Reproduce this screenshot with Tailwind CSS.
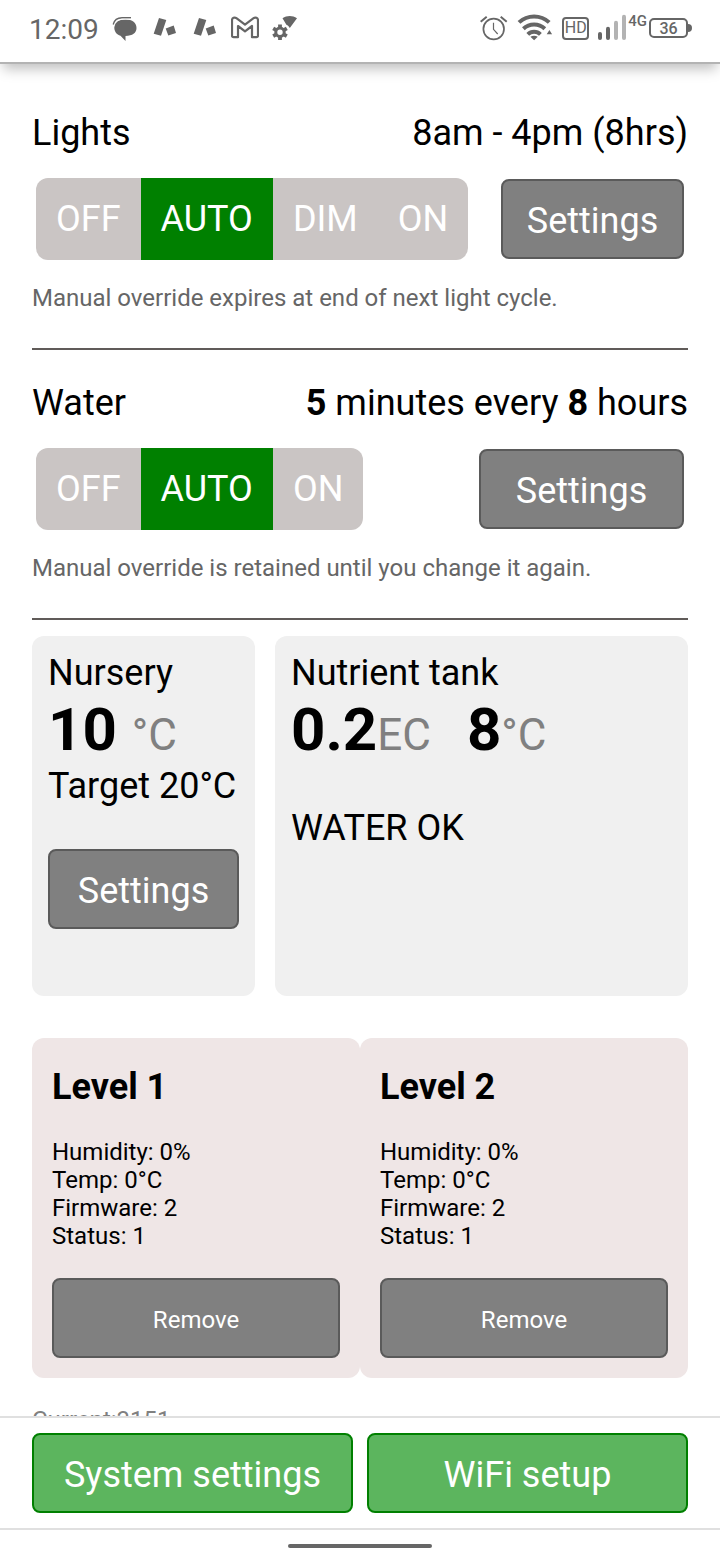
<!DOCTYPE html>
<html lang="en">
  <head>
    <meta charset="UTF-8" />
    <meta name="viewport" content="width=device-width, initial-scale=1.0" />
    <title>Grow controller</title>
    <script src="https://cdn.jsdelivr.net/npm/@tailwindcss/browser@4"></script>
  </head>
  <body class="bg-white text-black min-h-screen font-['Roboto',sans-serif] text-[36px] leading-[42px]">
    <!-- Phone status bar -->
    <header class="relative h-16 border-b-2 border-[#b3b3b3] bg-white shadow-[0_8px_12px_-3px_rgba(0,0,0,0.25)] px-7 pb-[6px] flex items-center justify-between text-[#666]">
      <div class="flex items-center gap-3">
        <span class="text-[28px] leading-8 pt-1 pl-px">12:09</span>
        <svg class="size-7" viewBox="0 0 28 28" fill="currentColor">
          <path d="M3.300 13.500C3.300 8.500 7.500 5.600 14.500 5.600S25.500 9 25.500 14s-4 7.700-11 8V27l-5-5.200C5.600 20.500 3.300 17.500 3.300 13.500z" />
          <path d="M2.200 10.500C3.200 6.500 6.500 3.800 11 3.800h9" fill="none" stroke="currentColor" stroke-width="1.400" />
          <path d="M3 12.500C4 8 7.500 5.200 12 5.200h9" fill="none" stroke="#fff" stroke-width=".8" />
        </svg>
        <svg class="size-7" viewBox="0 0 28 28" fill="currentColor">
          <path d="M8 4l7.300 2L10 21.700l-7.300-2zM22.700 11.400l2.300 7.600-7.700 2.600-2.600-7z" />
        </svg>
        <svg class="size-7" viewBox="0 0 28 28" fill="currentColor">
          <path d="M8 4l7.300 2L10 21.700l-7.300-2zM22.700 11.400l2.300 7.600-7.700 2.600-2.600-7z" />
        </svg>
        <svg class="size-7" viewBox="0 0 28 28" fill="none" stroke="currentColor" stroke-width="2.200" stroke-linejoin="round">
          <path d="M2.500 23.200H7V12l7 5.300L21 12v11.200h4.500c1 0 1.500-.6 1.500-1.500V6.200c0-2.300-2.600-3.300-4.400-2L14 10.600 5.400 4.200C3.600 2.900 1 3.900 1 6.200v15.500c0 .9.5 1.500 1.500 1.500z" />
        </svg>
        <svg class="size-7" viewBox="0 0 28 28" fill="none" stroke="currentColor">
          <circle cx="9" cy="18.300" r="4.200" stroke-width="3" />
          <path d="M9 10.500v3M9 23.100v3M2.200 14.400l2.600 1.500M13.200 20.700l2.600 1.500M2.200 22.200l2.600-1.500M13.200 15.900l2.600-1.500" stroke-width="3.800" />
          <path d="M11.500 4.200c4.500-3 10-3 14.500 0L18.800 14c-.8-1.600-2-2.600-3.400-3.300z" fill="currentColor" stroke="none" />
        </svg>
      </div>

      <div class="flex items-center gap-[9px]">
        <svg class="size-7" viewBox="0 0 28 28" fill="none" stroke="currentColor">
          <circle cx="13.700" cy="15" r="10.300" stroke-width="1.700" />
          <path d="M.7 7.700l6-5M20.700 2.700l6 5" stroke-width="2" />
          <path d="M13.500 8.700v6.600l4.200 4.700" stroke-width="1.200" />
        </svg>
        <svg class="h-7 w-9" viewBox="0 0 36 28" fill="none" stroke="currentColor" stroke-width="4">
          <path d="M2 8.400A22 22 0 0 1 32.200 8.400M6.400 14.800a15.500 15.500 0 0 1 21.400 0M10.800 20.400a9 9 0 0 1 12.600 0" />
          <path d="M13.400 22.800q3.700-2 7.400 0l-3.700 3.400zM29.700 20.300h5.400L32.400 16z" fill="currentColor" stroke="none" />
        </svg>
        <span class="h-[23px] w-[27px] border-2 border-[#666] rounded-[4px] flex items-center justify-center text-[16px] leading-4">HD</span>
        <div class="flex items-center gap-[2px]">
          <svg class="size-7" viewBox="0 0 28 28" fill="currentColor">
            <rect y="18" width="4" height="8" rx="2" />
            <rect x="8" y="12.700" width="4" height="13.300" rx="2" />
            <rect x="16" y="6.700" width="4" height="19.300" rx="2" fill="#b3b3b3" />
            <rect x="24" y=".7" width="4" height="25.300" rx="2" fill="#b3b3b3" />
          </svg>
          <span class="self-start text-[15px] leading-[14px] font-medium">4G</span>
          <div class="flex items-center">
            <span class="h-5 w-[39px] border-2 border-[#666] rounded-[5px] flex items-center justify-center pt-px text-[16px] leading-4 font-medium">36</span>
            <span class="h-2 w-1 bg-[#666] rounded-r-full"></span>
          </div>
        </div>
      </div>
    </header>

    <main class="px-8 pt-4 pb-[160px]">
      <!-- Lights -->
      <section class="border-b-2 border-[#605b59] pt-8 pb-9">
        <div class="flex justify-between">
          <h2>Lights</h2>
          <p>8am - 4pm (8hrs)</p>
        </div>
        <div class="flex items-center justify-between px-1 my-6">
          <div class="flex rounded-xl overflow-hidden bg-[#cac5c4] text-white" role="radiogroup" aria-label="Lights mode">
            <label class="px-5 py-5 has-checked:bg-[#008000]"><input type="radio" name="lights" class="sr-only" />OFF</label>
            <label class="px-5 py-5 has-checked:bg-[#008000]"><input type="radio" name="lights" class="sr-only" checked />AUTO</label>
            <label class="px-5 py-5 has-checked:bg-[#008000]"><input type="radio" name="lights" class="sr-only" />DIM</label>
            <label class="px-5 py-5 has-checked:bg-[#008000]"><input type="radio" name="lights" class="sr-only" />ON</label>
          </div>
          <button class="h-20 w-[183px] pt-1 rounded-lg border-2 border-[#5a5a5a] bg-[#808080] text-white">Settings</button>
        </div>
        <p class="text-[24px] leading-7 text-[#666]">Manual override expires at end of next light cycle.</p>
      </section>

      <!-- Water -->
      <section class="border-b-2 border-[#605b59] pt-8 pb-9">
        <div class="flex justify-between">
          <h2>Water</h2>
          <p><b>5</b> minutes every <b>8</b> hours</p>
        </div>
        <div class="flex items-center justify-between px-1 my-6">
          <div class="flex rounded-xl overflow-hidden bg-[#cac5c4] text-white" role="radiogroup" aria-label="Water mode">
            <label class="px-5 py-5 has-checked:bg-[#008000]"><input type="radio" name="water" class="sr-only" />OFF</label>
            <label class="px-5 py-5 has-checked:bg-[#008000]"><input type="radio" name="water" class="sr-only" checked />AUTO</label>
            <label class="px-5 py-5 has-checked:bg-[#008000]"><input type="radio" name="water" class="sr-only" />ON</label>
          </div>
          <button class="h-20 w-[205px] pt-1 rounded-lg border-2 border-[#5a5a5a] bg-[#808080] text-white">Settings</button>
        </div>
        <p class="text-[24px] leading-7 text-[#666]">Manual override is retained until you change it again.</p>
      </section>

      <!-- Nursery and tank readings -->
      <div class="flex gap-5 mt-4 min-h-[360px]">
        <section class="w-[223px] shrink-0 rounded-xl bg-[#f0f0f0] p-4">
          <h2>Nursery</h2>
          <p class="text-[60px] leading-[71px] font-bold">10 <span class="text-[44px] leading-none font-normal text-[#808080]">°C</span></p>
          <p>Target 20°C</p>
          <button class="h-20 w-full mt-[42px] pt-1 rounded-lg border-2 border-[#5a5a5a] bg-[#808080] text-white">Settings</button>
        </section>
        <section class="grow rounded-xl bg-[#f0f0f0] p-4">
          <h2>Nutrient tank</h2>
          <p class="text-[60px] leading-[71px] font-bold flex gap-9">
            <span>0.2<span class="text-[44px] leading-none font-normal text-[#808080]">EC</span></span>
            <span>8<span class="text-[44px] leading-none font-normal text-[#808080]">°C</span></span>
          </p>
          <p class="mt-[42px]">WATER OK</p>
        </section>
      </div>

      <!-- Levels -->
      <div class="grid grid-cols-2 mt-[42px] text-[24px] leading-7">
        <section class="rounded-xl bg-[#efe6e6] p-5">
          <h3 class="text-[36px] leading-[42px] font-bold mt-2 mb-[30px]">Level 1</h3>
          <p>Humidity: 0%</p>
          <p>Temp: 0°C</p>
          <p>Firmware: 2</p>
          <p>Status: 1</p>
          <button class="h-20 w-full mt-7 pt-1 rounded-lg border-2 border-[#5a5a5a] bg-[#808080] text-white">Remove</button>
        </section>
        <section class="rounded-xl bg-[#efe6e6] p-5">
          <h3 class="text-[36px] leading-[42px] font-bold mt-2 mb-[30px]">Level 2</h3>
          <p>Humidity: 0%</p>
          <p>Temp: 0°C</p>
          <p>Firmware: 2</p>
          <p>Status: 1</p>
          <button class="h-20 w-full mt-7 pt-1 rounded-lg border-2 border-[#5a5a5a] bg-[#808080] text-white">Remove</button>
        </section>
      </div>

      <p class="mt-7 text-[24px] leading-7 text-[#808080]">Current:3151</p>
    </main>

    <!-- Bottom actions -->
    <footer class="fixed inset-x-0 bottom-0 bg-white">
      <div class="grid grid-cols-2 gap-[14px] border-y-2 border-[#e0e0e0] px-8 py-[15px]">
        <button class="h-20 pt-1 rounded-lg border-2 border-[#008000] bg-[#5cb55e] text-white">System settings</button>
        <button class="h-20 pt-1 rounded-lg border-2 border-[#008000] bg-[#5cb55e] text-white">WiFi setup</button>
      </div>
      <div class="h-[30px] flex items-center justify-center pt-[2px]">
        <span class="h-1 w-36 rounded-full bg-[#666]"></span>
      </div>
    </footer>
  </body>
</html>
